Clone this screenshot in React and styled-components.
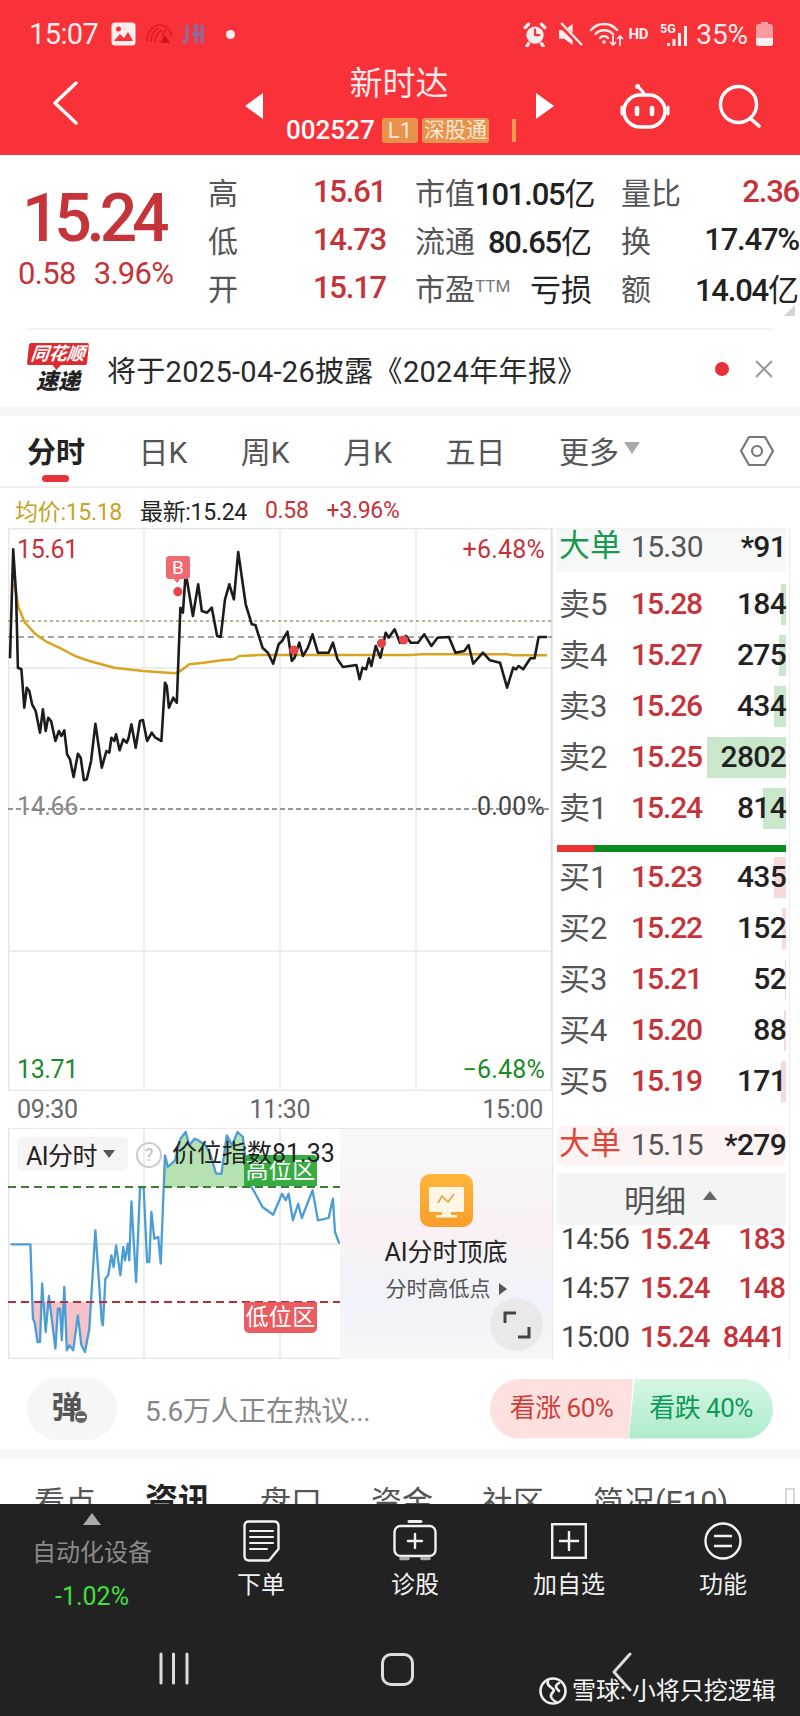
import React from "react";
import styled, { createGlobalStyle } from "styled-components";

const FONT = `Roboto, "Noto Sans CJK SC", sans-serif`;
const RED = "#c5343a";

const Global = createGlobalStyle`
  html, body { margin: 0; padding: 0; background: #fff; }
  body { font-family: ${FONT}; overflow: hidden; }
  * { box-sizing: border-box; }
`;

const Page = styled.div`
  width: 800px;
  height: 1716px;
  overflow: hidden;
  display: flex;
  flex-direction: column;
  background: #fff;
  color: #222;
`;

/* ---------- header ---------- */
const Header = styled.header`
  height: 155px;
  background: #f93138;
  color: #fff;
  flex: none;
  display: flex;
  flex-direction: column;
`;
const StatusBar = styled.div`
  height: 58px;
  padding: 10px 27px 0 29px;
  display: flex;
  align-items: center;
  justify-content: space-between;
`;
const StatusGroup = styled.div`
  display: flex;
  align-items: center;
  gap: ${(p) => p.$gap || 8}px;
`;
const Clock = styled.span`
  font-size: 29px;
  letter-spacing: -0.6px;
  margin-right: 4px;
  color: #fdeeee;
`;
const Battery = styled.span`
  font-size: 28px;
  letter-spacing: -0.1px;
  color: #fdeeee;
`;
const StatusHd = styled.span`
  font-size: 15px;
  font-weight: 700;
  color: #fdeeee;
  margin: 0 6px 0 -1px;
  letter-spacing: -0.3px;
`;
const Nav = styled.div`
  flex: 1;
  display: flex;
  align-items: flex-start;
  padding-left: 53px;
  position: relative;
`;
const BackBtn = styled.div`
  width: 27px;
  margin-top: 23px;
  display: flex;
`;
const Switcher = styled.div`
  margin-left: 165px;
  width: 309px;
  display: flex;
  align-items: center;
  justify-content: space-between;
  margin-top: 35px;
`;
const Tri = styled.div`
  width: 0;
  height: 0;
  border-top: 13px solid transparent;
  border-bottom: 13px solid transparent;
  ${(p) => (p.$left ? "border-right: 18px solid #fff;" : "border-left: 18px solid #fff;")}
`;
const Center = styled.div`
  position: absolute;
  left: 286px;
  top: 8px;
  width: 230px;
  display: flex;
  flex-direction: column;
`;
const Title = styled.div`
  font-size: 33px;
  line-height: 36px;
  text-align: center;
  width: 226px;
  color: #fdeaea;
`;
const CodeRow = styled.div`
  display: flex;
  align-items: center;
  margin-top: 13px;
`;
const Code = styled.span`
  font-size: 26px;
  font-weight: 500;
  line-height: 30px;
  width: 97px;
  letter-spacing: 0;
`;
const Tag = styled.span`
  height: 25px;
  background: #e8934c;
  border-radius: 3px;
  color: #fde7d3;
  font-size: ${(p) => p.$size || 21}px;
  line-height: 25px;
  padding: 0 ${(p) => p.$pad || 5}px;
  margin-right: 4px;
  white-space: nowrap;
`;
const TagBar = styled.span`
  width: 4px;
  height: 23px;
  background: #f09a50;
  margin-left: 19px;
`;
const NavIcons = styled.div`
  position: absolute;
  left: 619px;
  top: 25px;
  display: flex;
  gap: 47px;
  align-items: center;
`;

/* ---------- quote ---------- */
const Quote = styled.section`
  height: 173px;
  flex: none;
  display: flex;
  position: relative;
`;
const PriceBox = styled.div`
  width: 208px;
  flex: none;
  padding-left: 22px;
  color: ${RED};
`;
const BigPrice = styled.div`
  font-size: 66px;
  font-weight: 500;
  letter-spacing: -5.2px;
  line-height: 70px;
  margin-top: 29px;
`;
const SubPrice = styled.div`
  display: flex;
  gap: 18px;
  margin-left: -4px;
  margin-top: 2px;
  font-size: 31px;
  letter-spacing: -0.7px;
  line-height: 36px;
`;
const QuoteGrid = styled.div`
  margin-top: 12px;
  display: grid;
  grid-template-columns: 179px 178px 179px;
  grid-auto-rows: 48px;
  column-gap: 28px;
  align-content: start;
`;
const Cell = styled.div`
  display: flex;
  align-items: center;
  justify-content: space-between;
  white-space: nowrap;
`;
const CellLabel = styled.span`
  font-size: 30px;
  color: #555;
`;
const Sup = styled.span`
  font-size: 17px;
  vertical-align: 8px;
  color: #777;
`;
const CellValue = styled.span`
  font-size: 31px;
  font-weight: 500;
  letter-spacing: -1.2px;
  color: ${(p) => (p.$red ? RED : "#222")};
  margin-right: 1px;
`;
const CellUnit = styled.span`
  font-weight: 400;
  letter-spacing: 0;
`;
const CornerMark = styled.div`
  position: absolute;
  right: 5px;
  top: 150px;
  width: 0;
  height: 0;
  border-left: 11px solid transparent;
  border-bottom: 11px solid #d4d4d4;
`;

/* ---------- notice ---------- */
const Notice = styled.section`
  height: 79px;
  flex: none;
  margin: 0 26px;
  border-top: 2px solid #f3f3f3;
  display: flex;
  align-items: center;
  position: relative;
`;
const Logo = styled.div`
  width: 62px;
  height: 52px;
  flex: none;
  margin-left: 1px;
  display: flex;
  flex-direction: column;
  align-items: center;
`;
const LogoBanner = styled.div`
  width: 60px;
  height: 22px;
  background: #dd2c2f;
  border-radius: 2px;
  color: #fff;
  font-size: 18px;
  line-height: 22px;
  font-weight: 700;
  font-style: italic;
  text-align: center;
  transform: skewX(-6deg);
  position: relative;
  white-space: nowrap;
  &::after {
    content: "";
    position: absolute;
    left: 25px;
    bottom: -5px;
    border-left: 5px solid transparent;
    border-right: 5px solid transparent;
    border-top: 6px solid #dd2c2f;
  }
`;
const LogoText = styled.div`
  font-size: 22px;
  line-height: 26px;
  font-weight: 900;
  font-style: italic;
  color: #222;
  margin-top: 4px;
`;
const NoticeText = styled.div`
  margin-left: 18px;
  font-size: 29px;
  letter-spacing: 0.3px;
  color: #2a2a2a;
  white-space: nowrap;
`;
const NoticeDot = styled.span`
  width: 14px;
  height: 14px;
  border-radius: 50%;
  background: #e8303a;
  margin-left: auto;
  margin-right: 26px;
`;
const Close = styled.svg`
  width: 18px;
  height: 18px;
  margin-right: 1px;
`;
const Band = styled.div`
  height: ${(p) => p.$h}px;
  flex: none;
  background: #f6f6f6;
`;

/* ---------- chart tabs ---------- */
const Tabs = styled.nav`
  height: 72px;
  flex: none;
  display: flex;
  align-items: center;
  padding: 0 26px 0 27px;
  border-bottom: 2px solid #efefef;
  gap: 53.5px;
`;
const TabItem = styled.div`
  position: relative;
  font-size: ${(p) => (p.$active ? 29 : 30)}px;
  font-weight: ${(p) => (p.$active ? 700 : 400)};
  color: ${(p) => (p.$active ? "#222" : "#555")};
  white-space: nowrap;
  margin-top: -2px;
  display: flex;
  align-items: center;
  gap: 5px;
  ${(p) =>
    p.$active &&
    `&::after {
      content: "";
      position: absolute;
      left: 15px;
      bottom: -11px;
      width: 27px;
      height: 7px;
      border-radius: 4px;
      background: #e8323a;
    }`}
`;
const TabCaret = styled.span`
  width: 0;
  height: 0;
  border-left: 8px solid transparent;
  border-right: 8px solid transparent;
  border-top: 12px solid #aaa;
  margin-top: -4px;
`;
const HexWrap = styled.div`
  margin-left: auto;
  display: flex;
`;

const InfoLine = styled.div`
  height: 40px;
  flex: none;
  display: flex;
  align-items: center;
  padding: 4px 0 0 15px;
  font-size: 23px;
  gap: 18px;
  letter-spacing: -0.3px;
`;
const InfoItem = styled.span`
  color: ${(p) => p.$color};
  white-space: nowrap;
`;

/* ---------- main ---------- */
const Main = styled.div`
  height: 831px;
  flex: none;
  padding-left: 8px;
  display: flex;
`;
const LeftCol = styled.div`
  width: 544px;
  flex: none;
  display: flex;
  flex-direction: column;
`;
const ChartBox = styled.div`
  position: relative;
  height: 563px;
  flex: none;
`;
const ChartSvg = styled.svg`
  display: block;
  width: 544px;
  height: 563px;
`;
const ChartLabel = styled.span`
  position: absolute;
  top: ${(p) => p.$top}px;
  ${(p) => (p.$right ? "right: 7px;" : "left: 9px;")}
  font-size: 25px;
  line-height: 28px;
  letter-spacing: ${(p) => (p.$right ? "0.2px" : "-0.4px")};
  color: ${(p) => p.$color};
`;
const BBadge = styled.div`
  position: absolute;
  left: 158px;
  top: 28px;
  width: 24px;
  height: 23px;
  background: #ee6a70;
  border-radius: 3px;
  color: #fff;
  font-size: 19px;
  line-height: 23px;
  text-align: center;
  &::after {
    content: "";
    position: absolute;
    left: 7px;
    bottom: -4px;
    border-left: 4px solid transparent;
    border-right: 4px solid transparent;
    border-top: 5px solid #ee6a70;
  }
`;
const TimeAxis = styled.div`
  height: 37px;
  flex: none;
  display: flex;
  justify-content: space-between;
  align-items: center;
  padding: 0 9px 0 9px;
  font-size: 25px;
  letter-spacing: -0.3px;
  color: #666;
`;
const AiBox = styled.div`
  height: 231px;
  flex: none;
  display: flex;
  border-top: 1px solid #e8e8e8;
`;
const AiChart = styled.div`
  position: relative;
  width: 332px;
  flex: none;
`;
const AiSvg = styled.svg`
  display: block;
  width: 332px;
  height: 230px;
`;
const AiSelect = styled.div`
  position: absolute;
  left: 9px;
  top: 8px;
  width: 111px;
  height: 34px;
  border-radius: 5px;
  background: #f6f4f4;
  display: flex;
  align-items: center;
  padding-left: 9px;
  gap: 6px;
  font-size: 25px;
  letter-spacing: -0.5px;
  color: #222;
  white-space: nowrap;
`;
const AiCaret = styled.span`
  width: 0;
  height: 0;
  border-left: 6px solid transparent;
  border-right: 6px solid transparent;
  border-top: 8px solid #555;
`;
const Help = styled.span`
  position: absolute;
  left: 128px;
  top: 13px;
  width: 26px;
  height: 26px;
  border-radius: 50%;
  border: 2px solid #ccc;
  color: #bbb;
  font-size: 18px;
  line-height: 22px;
  text-align: center;
`;
const AiIndex = styled.span`
  position: absolute;
  left: 164px;
  top: 8px;
  font-size: 25px;
  line-height: 34px;
  color: #222;
  white-space: nowrap;
  z-index: 1;
`;
const Zone = styled.span`
  position: absolute;
  left: 236px;
  top: ${(p) => p.$top}px;
  width: 73px;
  height: 31px;
  background: ${(p) => p.$bg};
  border-radius: ${(p) => p.$radius};
  color: #fff;
  opacity: 0.95;
  font-size: 23px;
  line-height: 31px;
  text-align: center;
  letter-spacing: 0.4px;
`;
const AiPanel = styled.div`
  position: relative;
  flex: 1;
  display: flex;
  flex-direction: column;
  align-items: center;
  padding-top: 45px;
  background: linear-gradient(180deg, #f8f8f9 0%, #f9f1f3 45%, #f0f3f9 72%, #f7f6f8 100%);
`;
const AiTitle = styled.div`
  font-size: 25px;
  line-height: 30px;
  margin-top: 11px;
  color: #222;
  white-space: nowrap;
`;
const AiSub = styled.div`
  font-size: 21px;
  line-height: 28px;
  margin-top: 7px;
  color: #555;
  display: flex;
  align-items: center;
  gap: 8px;
  white-space: nowrap;
`;
const AiSubCaret = styled.span`
  width: 0;
  height: 0;
  border-top: 6px solid transparent;
  border-bottom: 6px solid transparent;
  border-left: 8px solid #555;
`;
const Expand = styled.div`
  position: absolute;
  right: 9px;
  bottom: 8px;
  width: 53px;
  height: 53px;
  border-radius: 50%;
  background: #ebe8e9;
  display: flex;
  align-items: center;
  justify-content: center;
`;

/* ---------- order book ---------- */
const Book = styled.aside`
  width: 238px;
  flex: none;
  border-left: 1px solid #e8e8e8;
  border-right: 1px solid #eee;
  border-top: 1px solid #f1f1f1;
  padding: 0 3px 0 4px;
  display: flex;
  flex-direction: column;
`;
const BigRow = styled.div`
  height: ${(p) => p.$h}px;
  flex: none;
  margin-top: ${(p) => p.$mt}px;
  padding-bottom: ${(p) => p.$pb}px;
  background: ${(p) => p.$bg};
  border-radius: ${(p) => p.$r || 0}px;
  display: grid;
  grid-template-columns: 74px 1fr auto;
  align-items: center;
  font-size: 30px;
  line-height: 32px;
`;
const BigLabel = styled.span`
  color: ${(p) => p.$color};
  padding: 0 0 3px 2px;
  font-size: 31px;
  white-space: nowrap;
`;
const BigPriceCell = styled.span`
  color: #555;
  letter-spacing: -0.7px;
`;
const BigQty = styled.span`
  color: #222;
  font-weight: 500;
  letter-spacing: -0.7px;
`;
const BookRow = styled.div`
  position: relative;
  height: 51px;
  flex: none;
  display: grid;
  grid-template-columns: 74px 1fr auto;
  align-items: center;
  font-size: 30px;
  margin-top: ${(p) => p.$mt || 0}px;
`;
const BookLabel = styled.span`
  color: #555;
  padding: 0 0 7px 2px;
  font-size: 31px;
  white-space: nowrap;
`;
const BookPrice = styled.span`
  color: ${RED};
  font-weight: 500;
  letter-spacing: -1.1px;
  padding-bottom: 4px;
`;
const BookQty = styled.span`
  color: #222;
  font-weight: 500;
  position: relative;
  z-index: 1;
  letter-spacing: -0.7px;
  padding-bottom: 4px;
`;
const DepthBar = styled.span`
  position: absolute;
  right: 0;
  top: 5px;
  height: 41px;
  background: ${(p) => p.$color};
`;
const Ratio = styled.div`
  height: 7px;
  flex: none;
  margin-top: 11px;
  background: #0b8a1f;
  display: flex;
`;
const RatioRed = styled.span`
  background: #ec3232;
  display: block;
  height: 100%;
`;
const DetailHead = styled.div`
  height: 52px;
  flex: none;
  margin-top: 7px;
  background: #f4f4f4;
  display: flex;
  align-items: center;
  padding: 0 0 2px 67px;
  font-size: 31px;
  gap: 17px;
  color: #555;
`;
const DetailCaret = styled.span`
  width: 0;
  height: 0;
  border-left: 7px solid transparent;
  border-right: 7px solid transparent;
  border-bottom: 9px solid #666;
  margin-top: -6px;
`;
const DetailList = styled.div`
  margin-top: -11px;
  position: relative;
`;
const DetailRow = styled.div`
  height: 49px;
  display: grid;
  grid-template-columns: 79px 1fr auto;
  align-items: center;
  font-size: 29px;
  padding: 0 1px 0 4px;
`;
const DetailTime = styled.span`
  color: #444;
  letter-spacing: -0.8px;
`;
const DetailNum = styled.span`
  color: ${RED};
  font-weight: 500;
  letter-spacing: -0.9px;
`;

/* ---------- comment bar ---------- */
const CommentBar = styled.section`
  height: 90px;
  flex: none;
  display: flex;
  align-items: center;
  padding: 9px 27px 0;
`;
const DanBtn = styled.div`
  position: relative;
  width: 90px;
  height: 62px;
  border-radius: 30px;
  background: #f6f6f6;
  font-size: 31px;
  font-weight: 700;
  color: #555;
  display: flex;
  align-items: center;
  justify-content: center;
  padding: 0 10px 8px 0;
`;
const DanMinus = styled.span`
  position: absolute;
  left: 47px;
  top: 32px;
  width: 14px;
  height: 14px;
  border-radius: 50%;
  background: #666;
  border: 1px solid #f6f6f6;
  &::after {
    content: "";
    position: absolute;
    left: 2px;
    top: 5px;
    width: 8px;
    height: 2px;
    background: #fff;
  }
`;
const CommentText = styled.div`
  margin-left: 28px;
  font-size: 28px;
  letter-spacing: -0.3px;
  color: #888;
  white-space: nowrap;
`;
const Vote = styled.div`
  margin-left: auto;
  display: flex;
  height: 60px;
  width: 283px;
`;
const VotePart = styled.div`
  flex: none;
  width: ${(p) => p.$w}px;
  height: 100%;
  background: ${(p) => p.$bg};
  color: ${(p) => p.$color};
  border-radius: ${(p) => p.$radius};
  clip-path: ${(p) => p.$clip};
  margin-left: ${(p) => p.$ml || 0}px;
  font-size: 26px;
  letter-spacing: -0.5px;
  display: flex;
  align-items: center;
  justify-content: center;
  padding-bottom: 6px;
  white-space: nowrap;
`;

/* ---------- section tabs ---------- */
const SectionTabs = styled.nav`
  height: 46px;
  flex: none;
  overflow: hidden;
  display: flex;
  align-items: flex-start;
  padding: 29px 0 0 34px;
  gap: 49px;
  position: relative;
`;
const SectionTab = styled.span`
  font-size: ${(p) => (p.$active ? 33 : 31)}px;
  font-weight: ${(p) => (p.$active ? 700 : 400)};
  line-height: 32px;
  margin-top: ${(p) => (p.$active ? -2 : 0)}px;
  color: ${(p) => (p.$active ? "#222" : "#555")};
  white-space: nowrap;
`;
const SectionIcon = styled.span`
  position: absolute;
  left: 785px;
  top: 30px;
  width: 10px;
  height: 16px;
  border: 2px solid #d8d8d8;
  border-bottom: none;
`;

/* ---------- footer ---------- */
const Footer = styled.footer`
  position: relative;
  flex: 1;
  background: #222;
  color: #fff;
  display: flex;
  flex-direction: column;
`;
const ActionRow = styled.div`
  display: grid;
  grid-template-columns: 184px repeat(4, 154px);
  height: 148px;
  flex: none;
`;
const Sector = styled.div`
  padding-top: 9px;
  display: flex;
  flex-direction: column;
  align-items: center;
`;
const SectorCaret = styled.span`
  width: 0;
  height: 0;
  border-left: 9px solid transparent;
  border-right: 9px solid transparent;
  border-bottom: 12px solid #aaa;
`;
const SectorName = styled.div`
  font-size: 24px;
  line-height: 30px;
  color: #8a8a8a;
  margin-top: 13px;
  white-space: nowrap;
`;
const SectorChange = styled.div`
  font-size: 25px;
  line-height: 30px;
  color: #3fe03f;
  margin-top: 14px;
`;
const Action = styled.div`
  padding-top: 15px;
  display: flex;
  flex-direction: column;
  align-items: center;
`;
const ActionIcon = styled.div`
  height: 44px;
  display: flex;
  align-items: center;
  justify-content: center;
`;
const ActionLabel = styled.div`
  font-size: 24px;
  line-height: 30px;
  margin-top: 7px;
  color: #f2f2f2;
  white-space: nowrap;
`;
const SysNav = styled.div`
  display: flex;
  align-items: flex-start;
  padding-left: 159px;
`;
const SysHome = styled.span`
  width: 33px;
  height: 33px;
  margin-left: 192px;
  margin-top: 1px;
  border: 3px solid #ddd;
  border-radius: 10px;
`;
const SysBack = styled.div`
  margin-left: 198px;
  display: flex;
`;
const Watermark = styled.div`
  position: absolute;
  left: 539px;
  top: 173px;
  display: flex;
  align-items: center;
  gap: 5px;
  font-size: 24px;
  line-height: 28px;
  color: #f5f5f5;
  white-space: nowrap;
`;

/* ---------- data ---------- */
const price = [[28,712],[37,385],[45,520],[50,740],[60,745],[68,860],[75,800],[82,810],[90,850],[100,870],[112,935],[120,865],[128,930],[135,890],[143,900],[155,960],[165,930],[172,945],[180,928],[188,1000],[196,1015],[206,1068],[218,998],[226,1010],[235,1078],[243,1075],[255,1020],[267,908],[285,1040],[298,990],[306,995],[312,950],[320,960],[325,940],[335,988],[345,955],[355,965],[360,950],[368,910],[380,980],[392,900],[400,897],[412,960],[425,935],[435,950],[452,960],[462,785],[467,795],[473,860],[485,830],[495,845],[505,560],[512,575],[520,455],[530,520],[540,585],[555,490],[565,570],[580,575],[593,560],[608,645],[618,648],[630,535],[642,490],[655,535],[667,393],[688,550],[705,610],[715,612],[735,680],[750,695],[765,728],[780,670],[790,660],[805,632],[817,720],[825,710],[838,665],[848,705],[862,680],[875,640],[890,695],[920,695],[932,665],[945,715],[960,738],[998,732],[1007,775],[1015,740],[1025,745],[1033,712],[1040,735],[1052,675],[1065,710],[1080,635],[1088,650],[1105,625],[1120,665],[1137,645],[1150,665],[1170,665],[1188,640],[1208,675],[1225,650],[1257,648],[1275,695],[1300,690],[1312,672],[1325,728],[1352,695],[1372,718],[1400,725],[1420,800],[1437,740],[1445,745],[1452,735],[1465,745],[1485,712],[1497,712],[1508,648],[1532,648]];
const avg = [[40,490],[52,560],[70,605],[100,640],[130,662],[170,682],[210,705],[250,720],[320,740],[400,750],[490,757],[505,750],[530,730],[570,725],[620,718],[655,715],[670,705],[730,702],[1150,702],[1180,700],[1420,700],[1440,703],[1532,703]];
const blue = [[30,397],[85,397],[92,620],[97,630],[105,690],[112,690],[118,515],[128,660],[137,552],[155,710],[162,590],[168,590],[173,685],[180,525],[187,715],[195,700],[205,715],[218,610],[228,700],[238,720],[250,650],[267,355],[285,630],[288,640],[295,500],[303,490],[312,430],[318,465],[325,400],[337,490],[345,405],[350,445],[358,395],[362,445],[368,268],[381,510],[392,228],[402,225],[412,450],[418,450],[424,300],[432,380],[443,375],[450,455],[462,130],[470,165],[490,145],[505,80],[520,60],[530,100],[545,80],[555,85],[575,100],[590,130],[605,185],[620,185],[635,70],[650,100],[665,60],[680,75],[695,210],[715,245],[735,285],[765,308],[790,245],[800,265],[808,245],[820,325],[835,275],[845,318],[875,235],[890,325],[920,318],[932,260],[938,360],[950,395]];

const toMain = ([x, y]) => `${(x / 2.8 - 8).toFixed(1)},${(y / 3 + 420 - 527).toFixed(1)}`;
const toAi = ([x, y]) => `${(x / 2.8 - 8).toFixed(1)},${(y / 3 - 17).toFixed(1)}`;
const pricePts = price.map(toMain).join(" ");
const avgPts = avg.map(toMain).join(" ");
const bluePts = blue.map(toAi).join(" ");
const dots = [[498,512],[823,687],[1068,667],[1130,657]].map(([x, y]) => [x / 2.8 - 8, y / 3 - 107]);

const sells = [["卖5","15.28","184",5],["卖4","15.27","275",7],["卖3","15.26","434",12],["卖2","15.25","2802",79],["卖1","15.24","814",23]];
const buys = [["买1","15.23","435",12],["买2","15.22","152",4],["买3","15.21","52",1],["买4","15.20","88",2],["买5","15.19","171",5]];
const detail = [["14:56","15.24","183"],["14:57","15.24","148"],["15:00","15.24","8441"]];
const quote = [
  ["高", "15.61", "", true], ["市值", "101.05", "亿"], ["量比", "2.36", "", true],
  ["低", "14.73", "", true], ["流通", "80.65", "亿"], ["换", "17.47%", ""],
  ["开", "15.17", "", true], ["市盈TTM", "", "亏损"], ["额", "14.04", "亿"],
];

/* ---------- icons ---------- */
const W = { fill: "none", stroke: "#fdeeee", strokeLinecap: "round", strokeLinejoin: "round" };

const StatusLeft = () => (
  <>
    <svg width="25" height="24" viewBox="0 0 25 24">
      <rect x="0.5" y="0.5" width="24" height="23" rx="3.5" fill="#fdeeee" />
      <circle cx="7.5" cy="7" r="2.5" fill="#f93138" />
      <path d="M3 19 l6-7 4 4 4-6 5 9z" fill="#f93138" />
    </svg>
    <svg width="28" height="24" viewBox="0 0 28 24" fill="none" stroke="#e01a20" strokeWidth="1.6">
      <path d="M2 19 C2 8 10 3 15 3 C21 3 26 8 27 14" />
      <path d="M6 20 C6 12 10 7 14 6 M10 20 C10 14 13 10 17 8 M21 7 L17 14" />
      <path d="M20 13 l5 8 h-10z" fill="#d01418" stroke="none" />
    </svg>
    <svg width="24" height="24" viewBox="0 0 24 24" fill="none" stroke="#8a6ea0" strokeWidth="3.2">
      <path d="M5 3 V17 L1 21 M11 5 L16 3 M10 12 H18 M14 3 V21 M20 3 V21" />
    </svg>
    <svg width="9" height="9" viewBox="0 0 9 9" style={{ marginLeft: 11 }}>
      <circle cx="4.5" cy="4.5" r="4.5" fill="#fdeeee" />
    </svg>
  </>
);

const StatusRight = () => (
  <>
    <svg width="26" height="26" viewBox="0 0 24 24" {...W} strokeWidth="3">
      <circle cx="12" cy="13" r="8" fill="#fdeeee" stroke="none" />
      <path d="M12 8 V13 H16" stroke="#f93138" strokeWidth="2" />
      <path d="M3 6 L6 3 M21 6 L18 3 M6 21 L4.5 23 M18 21 L19.5 23" />
    </svg>
    <svg width="25" height="25" viewBox="0 0 24 24" style={{ margin: "0 1px 0 4px" }}>
      <path d="M1 8 H6 L14 2 V22 L6 16 H1z" fill="#fdeeee" />
      <path d="M1 1 L23 23" stroke="#f93138" strokeWidth="5" />
      <path d="M3 1 L23 22" stroke="#fdeeee" strokeWidth="2.2" />
    </svg>
    <svg width="34" height="26" viewBox="0 0 34 26" {...W} strokeWidth="2.4">
      <path d="M1 9 C8 1 20 1 27 9 M5.5 13 C10 8 18 8 23 13 M10 17 C12 14.5 16 14.5 18 17" />
      <circle cx="14" cy="21" r="1.8" fill="#fdeeee" stroke="none" />
      <path d="M23 15 V24 M20.5 21.5 L23 24 L25.5 21.5 M30 24 V15 M27.5 17.5 L30 15 L32.5 17.5" strokeWidth="1.7" />
    </svg>
    <StatusHd>HD</StatusHd>
    <svg width="30" height="26" viewBox="0 0 30 26">
      <text x="0" y="12" fontSize="12.5" fontWeight="700" fill="#fdeeee" fontFamily="Roboto">5G</text>
      <path d="M7 22 h3 v3 h-3z M12.5 18 h3 v7 h-3z M18 12 h3 v13 h-3z M24 5 h3 v20 h-3z" fill="#fdeeee" />
    </svg>
  </>
);

const Chevron = ({ w, h, stroke = "#fff", sw = 3.4 }) => (
  <svg width={w} height={h} viewBox={`0 0 ${w} ${h}`} fill="none" stroke={stroke} strokeWidth={sw} strokeLinecap="round" strokeLinejoin="round">
    <path d={`M${w - 2} 2 L2 ${h / 2} L${w - 2} ${h - 2}`} />
  </svg>
);

const Robot = () => (
  <svg width="52" height="46" viewBox="0 0 52 46" fill="none" stroke="#fff" strokeWidth="3.6" strokeLinecap="round">
    <path d="M25 12 C25 7 21 8 19 3" strokeWidth="3" />
    <circle cx="18.5" cy="3.5" r="2.5" fill="#fff" stroke="none" />
    <rect x="5" y="12" width="41" height="32" rx="16" />
    <path d="M3 24 V31 M49 24 V31" strokeWidth="3" />
    <path d="M18 25 V31 M33 25 V31" strokeWidth="4.6" />
  </svg>
);

const Search = () => (
  <svg width="44" height="44" viewBox="0 0 44 44" fill="none" stroke="#fff" strokeWidth="3.4" strokeLinecap="round">
    <circle cx="20.5" cy="20.5" r="18" />
    <path d="M33 35 L41 42" strokeWidth="3.6" />
  </svg>
);

const Hex = () => (
  <svg width="34" height="34" viewBox="0 0 34 34" fill="none" stroke="#777" strokeWidth="2.2">
    <path d="M9 3 H25 L33 17 L25 31 H9 L1 17z" strokeLinejoin="round" />
    <circle cx="17" cy="17" r="5" />
  </svg>
);

const MainChart = () => (
  <ChartSvg viewBox="0 0 544 563">
    <g stroke="#e8e8e8" strokeWidth="1.4" fill="none">
      <path d="M0 0.7 H544 M0 140 H544 M0 423 H544 M0 562.4 H544" />
      <path d="M0.7 0 V563 M136 0 V563 M272 0 V563 M408 0 V563" />
      <path d="M543.4 0 V563" stroke="#e0e0e0" />
    </g>
    <path d="M0 93 H544" stroke="#a39a6e" strokeWidth="1.4" strokeDasharray="3 3" />
    <path d="M0 109 H544" stroke="#888" strokeWidth="1.4" strokeDasharray="6 4" />
    <path d="M0 281 H544" stroke="#777" strokeWidth="1.4" strokeDasharray="5 3" />
    <polyline points={avgPts} fill="none" stroke="#d9a521" strokeWidth="2.5" strokeLinejoin="round" />
    <polyline points={pricePts} fill="none" stroke="#1c1c1c" strokeWidth="2.6" strokeLinejoin="round" />
    {dots.map(([x, y], i) => (
      <circle key={i} cx={x} cy={y} r="4.6" fill="#e8444c" />
    ))}
  </ChartSvg>
);

const AiLines = () => (
  <AiSvg viewBox="0 0 332 230">
    <defs>
      <clipPath id="hi"><rect x="0" y="0" width="332" height="58" /></clipPath>
      <clipPath id="lo"><rect x="0" y="173" width="332" height="57" /></clipPath>
    </defs>
    <path d="M136 0 V230 M272 0 V230 M0 115 H332 M0 229.4 H332 M0.7 0 V230" stroke="#e4e4e4" strokeWidth="1.4" fill="none" />
    <polygon points={bluePts} fill="#b5e2b0" clipPath="url(#hi)" />
    <polygon points={bluePts} fill="#f8c3c8" clipPath="url(#lo)" />
    <polyline points={bluePts} fill="none" stroke="#4a9dd6" strokeWidth="2.3" strokeLinejoin="round" />
    <path d="M0 58 H332" stroke="#3d7d34" strokeWidth="2" strokeDasharray="8 5" />
    <path d="M0 173 H332" stroke="#b43040" strokeWidth="2" strokeDasharray="8 5" />
  </AiSvg>
);

const AiIcon = () => (
  <svg width="53" height="53" viewBox="0 0 53 53">
    <defs>
      <linearGradient id="ai" x1="0" y1="0" x2="0" y2="1">
        <stop offset="0" stopColor="#fdb73a" />
        <stop offset="1" stopColor="#f99d2a" />
      </linearGradient>
    </defs>
    <rect width="53" height="53" rx="10" fill="url(#ai)" />
    <rect x="9" y="13" width="35" height="25" rx="1" fill="#fff6e6" />
    <path d="M18 29 L22 22 L28 28 L34 20" fill="none" stroke="#e9a63c" strokeWidth="1.6" />
    <rect x="22" y="38" width="9" height="3" fill="#fff6e6" />
    <rect x="16" y="41" width="21" height="2.5" rx="1" fill="#fff6e6" />
  </svg>
);

const ExpandIcon = () => (
  <svg width="28" height="28" viewBox="0 0 28 28" fill="none" stroke="#444" strokeWidth="3">
    <path d="M2 12 V2 H13 M26 16 V26 H15" />
  </svg>
);

const FI = { fill: "none", stroke: "#f2f2f2", strokeWidth: 2.4, strokeLinejoin: "round", strokeLinecap: "round" };

const OrderIcon = () => (
  <svg width="37" height="42" viewBox="0 0 37 42" {...FI}>
    <path d="M6 1.5 H31 Q35.5 1.5 35.5 6 V29 L26 40.5 H6 Q1.5 40.5 1.5 36 V6 Q1.5 1.5 6 1.5z" />
    <path d="M7 11 H30 M7 17 H30 M7 23 H30 M7 29 H24" strokeWidth="2" />
  </svg>
);
const DiagIcon = () => (
  <svg width="44" height="42" viewBox="0 0 44 42" {...FI}>
    <rect x="1.5" y="6" width="41" height="30" rx="6" />
    <path d="M16 1.5 H28" strokeWidth="3" />
    <path d="M22 14 V28 M15 21 H29" />
    <path d="M8 38.5 H15 M29 38.5 H36" strokeWidth="3.6" stroke="#aaa" />
  </svg>
);
const AddIcon = () => (
  <svg width="36" height="36" viewBox="0 0 36 36" fill="none" stroke="#f2f2f2" strokeWidth="2.4">
    <rect x="1.2" y="1.2" width="33.6" height="33.6" />
    <path d="M18 8 V28 M8 18 H28" />
  </svg>
);
const FuncIcon = () => (
  <svg width="38" height="38" viewBox="0 0 38 38" fill="none" stroke="#f2f2f2" strokeWidth="2.4">
    <circle cx="19" cy="19" r="17.5" />
    <path d="M10 14 H28 M10 24 H28" />
  </svg>
);
const SysBars = () => (
  <svg width="30" height="33" viewBox="0 0 30 33" stroke="#ddd" strokeWidth="3" strokeLinecap="round">
    <path d="M2 2 V31 M14.5 2 V31 M28 2 V31" />
  </svg>
);
const XueqiuLogo = () => (
  <svg width="28" height="28" viewBox="0 0 28 28" fill="none" stroke="#f0f0f0" strokeWidth="2.6" strokeLinecap="round">
    <circle cx="14" cy="14" r="12.5" />
    <path d="M9 4 C6 10 18 11 14 15 C10 19 12 22 17 25 M20 6 C15 9 17 11 20 14" />
  </svg>
);

export default function App() {
  return (
    <Page>
      <Global />
      <Header>
        <StatusBar>
          <StatusGroup $gap={9}>
            <Clock>15:07</Clock>
            <StatusLeft />
          </StatusGroup>
          <StatusGroup $gap={6}>
            <StatusRight />
            <Battery>35%</Battery>
            <svg width="17" height="24" viewBox="0 0 17 24" style={{ marginLeft: 2 }}>
              <rect x="5" y="0" width="7" height="3" fill="#fb9aa0" />
              <rect x="0" y="2" width="17" height="22" rx="3" fill="#fb9aa0" />
              <path d="M0 16 H17 V21 a3 3 0 0 1 -3 3 H3 a3 3 0 0 1 -3 -3z" fill="#fdeeee" />
            </svg>
          </StatusGroup>
        </StatusBar>
        <Nav>
          <BackBtn><Chevron w={25} h={44} /></BackBtn>
          <Switcher>
            <Tri $left />
            <Tri />
          </Switcher>
          <Center>
            <Title>新时达</Title>
            <CodeRow>
              <Code>002527</Code>
              <Tag $size={22} $pad={6}>L1</Tag>
              <Tag $size={21} $pad={2}>深股通</Tag>
              <TagBar />
            </CodeRow>
          </Center>
          <NavIcons>
            <Robot />
            <Search />
          </NavIcons>
        </Nav>
      </Header>

      <Quote>
        <PriceBox>
          <BigPrice>15.24</BigPrice>
          <SubPrice>
            <span>0.58</span>
            <span>3.96%</span>
          </SubPrice>
        </PriceBox>
        <QuoteGrid>
          {quote.map(([l, v, u, r]) => (
            <Cell key={l}>
              <CellLabel>
                {l.startsWith("市盈") ? (<>市盈<Sup>TTM</Sup></>) : l}
              </CellLabel>
              <CellValue $red={r}>{v}{u && <CellUnit>{u}</CellUnit>}</CellValue>
            </Cell>
          ))}
        </QuoteGrid>
        <CornerMark />
      </Quote>

      <Notice>
        <Logo>
          <LogoBanner>同花顺</LogoBanner>
          <LogoText>速递</LogoText>
        </Logo>
        <NoticeText>将于2025-04-26披露《2024年年报》</NoticeText>
        <NoticeDot />
        <Close viewBox="0 0 18 18" fill="none" stroke="#999" strokeWidth="2">
          <path d="M1 1 L17 17 M17 1 L1 17" />
        </Close>
      </Notice>
      <Band $h={9} />

      <Tabs>
        <TabItem $active>分时</TabItem>
        <TabItem>日K</TabItem>
        <TabItem>周K</TabItem>
        <TabItem>月K</TabItem>
        <TabItem>五日</TabItem>
        <TabItem>更多<TabCaret /></TabItem>
        <HexWrap><Hex /></HexWrap>
      </Tabs>

      <InfoLine>
        <InfoItem $color="#c9a227">均价:15.18</InfoItem>
        <InfoItem $color="#222">最新:15.24</InfoItem>
        <InfoItem $color={RED}>0.58</InfoItem>
        <InfoItem $color={RED}>+3.96%</InfoItem>
      </InfoLine>

      <Main>
        <LeftCol>
          <ChartBox>
            <MainChart />
            <BBadge>B</BBadge>
            <ChartLabel $top={8} $color={RED}>15.61</ChartLabel>
            <ChartLabel $top={8} $right $color={RED}>+6.48%</ChartLabel>
            <ChartLabel $top={265} $color="#888">14.66</ChartLabel>
            <ChartLabel $top={265} $right $color="#444">0.00%</ChartLabel>
            <ChartLabel $top={528} $color="#1a8a2a">13.71</ChartLabel>
            <ChartLabel $top={528} $right $color="#1a8a2a">−6.48%</ChartLabel>
          </ChartBox>
          <TimeAxis>
            <span>09:30</span>
            <span>11:30</span>
            <span>15:00</span>
          </TimeAxis>
          <AiBox>
            <AiChart>
              <AiLines />
              <AiSelect>AI分时<AiCaret /></AiSelect>
              <Help>?</Help>
              <Zone $top={26} $bg="#2ea83a" $radius="4px 4px 0 0">高位区</Zone>
              <Zone $top={173} $bg="#e8555a" $radius="0 0 5px 5px">低位区</Zone>
              <AiIndex>价位指数81.33</AiIndex>
            </AiChart>
            <AiPanel>
              <AiIcon />
              <AiTitle>AI分时顶底</AiTitle>
              <AiSub>分时高低点<AiSubCaret /></AiSub>
              <Expand><ExpandIcon /></Expand>
            </AiPanel>
          </AiBox>
        </LeftCol>

        <Book>
          <BigRow $h={43} $mt={0} $pb={7} $bg="#f5f8f7">
            <BigLabel $color="#1a9a50">大单</BigLabel>
            <BigPriceCell>15.30</BigPriceCell>
            <BigQty>*91</BigQty>
          </BigRow>
          {sells.map(([l, p, q, w], i) => (
            <BookRow key={l} $mt={i === 0 ? 7 : 0}>
              <BookLabel>{l}</BookLabel>
              <BookPrice>{p}</BookPrice>
              <BookQty>{q}</BookQty>
              <DepthBar $color="#cbe7cb" style={{ width: w }} />
            </BookRow>
          ))}
          <Ratio>
            <RatioRed style={{ width: 37 }} />
          </Ratio>
          {buys.map(([l, p, q, w]) => (
            <BookRow key={l}>
              <BookLabel>{l}</BookLabel>
              <BookPrice>{p}</BookPrice>
              <BookQty>{q}</BookQty>
              <DepthBar $color="#f8d9d9" style={{ width: w }} />
            </BookRow>
          ))}
          <BigRow $h={40} $mt={19} $pb={2} $bg="#fdf3f3" $r={8}>
            <BigLabel $color="#e0453a">大单</BigLabel>
            <BigPriceCell>15.15</BigPriceCell>
            <BigQty>*279</BigQty>
          </BigRow>
          <DetailHead>明细<DetailCaret /></DetailHead>
          <DetailList>
            {detail.map(([t, p, q]) => (
              <DetailRow key={t}>
                <DetailTime>{t}</DetailTime>
                <DetailNum>{p}</DetailNum>
                <DetailNum>{q}</DetailNum>
              </DetailRow>
            ))}
          </DetailList>
        </Book>
      </Main>

      <CommentBar>
        <DanBtn>弹<DanMinus /></DanBtn>
        <CommentText>5.6万人正在热议...</CommentText>
        <Vote>
          <VotePart $w={143} $bg="#fde1de" $color="#cf3f3a" $radius="30px 0 0 30px" $clip="polygon(0 0, 100% 0, 97% 100%, 0 100%)">看涨 60%</VotePart>
          <VotePart $w={144} $ml={-4} $bg="linear-gradient(180deg,#d5f6e3,#aeeccb)" $color="#0f9a5a" $radius="0 30px 30px 0" $clip="polygon(4% 0, 100% 0, 100% 100%, 0 100%)">看跌 40%</VotePart>
        </Vote>
      </CommentBar>
      <Band $h={9} />

      <SectionTabs>
        <SectionTab>看点</SectionTab>
        <SectionTab $active>资讯</SectionTab>
        <SectionTab>盘口</SectionTab>
        <SectionTab>资金</SectionTab>
        <SectionTab>社区</SectionTab>
        <SectionTab>简况(F10)</SectionTab>
        <SectionIcon />
      </SectionTabs>

      <Footer>
        <ActionRow>
          <Sector>
            <SectorCaret />
            <SectorName>自动化设备</SectorName>
            <SectorChange>-1.02%</SectorChange>
          </Sector>
          <Action><ActionIcon><OrderIcon /></ActionIcon><ActionLabel>下单</ActionLabel></Action>
          <Action><ActionIcon><DiagIcon /></ActionIcon><ActionLabel>诊股</ActionLabel></Action>
          <Action><ActionIcon><AddIcon /></ActionIcon><ActionLabel>加自选</ActionLabel></Action>
          <Action><ActionIcon><FuncIcon /></ActionIcon><ActionLabel>功能</ActionLabel></Action>
        </ActionRow>
        <SysNav>
          <SysBars />
          <SysHome />
          <SysBack><Chevron w={20} h={40} stroke="#ddd" sw={3} /></SysBack>
        </SysNav>
        <Watermark>
          <XueqiuLogo />
          <span>雪球: 小将只挖逻辑</span>
        </Watermark>
      </Footer>
    </Page>
  );
}
